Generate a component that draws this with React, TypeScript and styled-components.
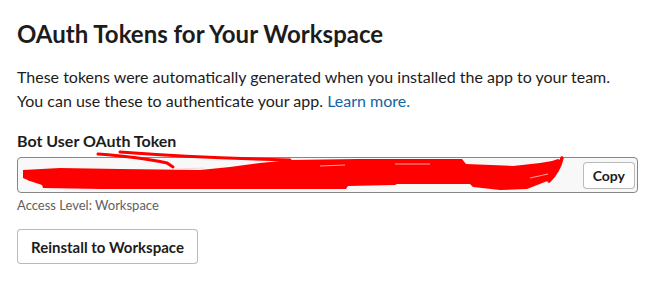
import React from 'react'
import styled, {createGlobalStyle} from 'styled-components'

const GlobalStyle = createGlobalStyle`
  html, body {
    margin: 0;
    padding: 0;
    background: #fff;
  }
  body {
    font-family: Lato, "Liberation Sans", sans-serif;
    color: #1d1c1d;
    -webkit-font-smoothing: antialiased;
  }
`

const Page = styled.div`
  padding: 19px 18px 0 17px;
`
const Title = styled.h1`
  margin: 0;
  font-size: 24px;
  font-weight: 700;
  line-height: normal;
`
const Intro = styled.p`
  margin: 17px 0 0;
  font-size: 16px;
  line-height: 24px;
`
const Link = styled.a`
  color: #1264a3;
  text-decoration: none;
`
const Label = styled.div`
  margin-top: 18px;
  font-size: 16px;
  font-weight: 700;
  line-height: 20px;
`
const FieldWrap = styled.div`
  position: relative;
  margin-top: 6px;
`
const Field = styled.div`
  box-sizing: border-box;
  height: 36px;
  display: flex;
  align-items: center;
  justify-content: space-between;
  padding: 0 2px 0 10px;
  background: #f8f8f8;
  border: 1px solid #868686;
  border-radius: 4px;
`
const TokenText = styled.span`
  font-size: 15px;
  color: #616061;
  white-space: nowrap;
  overflow: hidden;
`
const Button = styled.button<{small?: boolean}>`
  box-sizing: border-box;
  height: ${p => (p.small ? '27px' : '35px')};
  padding: 0 ${p => (p.small ? '9px' : '13px')};
  background: #fff;
  border: 1px solid rgba(29, 28, 29, 0.3);
  border-radius: 4px;
  font-family: Lato, "Liberation Sans", sans-serif;
  font-size: ${p => (p.small ? '14px' : '15px')};
  font-weight: 700;
  color: #1d1c1d;
  cursor: pointer;
`
const Scribble = styled.svg`
  position: absolute;
  left: 0;
  top: -10px;
  pointer-events: none;
`
const Hint = styled.div`
  margin-top: 3px;
  font-size: 13px;
  line-height: 18px;
  color: #616061;
`
const Actions = styled.div`
  display: flex;
  margin-top: 15px;
`

const App = () => {
  return <>
    <GlobalStyle/>
    <Page>
      <Title>OAuth Tokens for Your Workspace</Title>
      <Intro>
        These tokens were automatically generated when you installed the app to your team.<br/>
        You can use these to authenticate your app. <Link href="#">Learn more.</Link>
      </Intro>
      <Label>Bot User OAuth Token</Label>
      <FieldWrap>
        <Field>
          <TokenText>xoxb-0000000000000-0000000000000-xxxxxxxxxxxxxxxxxxxxxxxx</TokenText>
          <Button small>Copy</Button>
        </Field>
        {/* red redaction scribble, drawn in page coordinates */}
        <Scribble width="621" height="46" viewBox="17 147 621 46">
          <polygon
            fill="#ff0000"
            points="23,170 60,168 120,169 200,170 230,167 260,163 290,160 357,159 462,159 466,164 513,166 540,163 552,161 558,159 562,161 557,171 550,180 527,189 500,190 473,187 470,184 397,184 395,185 348,186 346,189 100,189 43,188 42,185 30,181 23,178"
          />
          <path d="M98 154 Q140 157 167 163 L173 167" stroke="#ff0000" strokeWidth="3" fill="none" strokeLinecap="round"/>
          <path d="M120 152 Q200 158 290 160" stroke="#ff0000" strokeWidth="3" fill="none" strokeLinecap="round"/>
          <path d="M562 158 Q559 171 549 181" stroke="#ff0000" strokeWidth="3.5" fill="none" strokeLinecap="round"/>
          <path d="M175 169 L205 168 M320 166 L345 165 M395 164 L430 164 M530 178 L548 174" stroke="#ffd0d0" strokeWidth="1" fill="none" opacity="0.8"/>
        </Scribble>
      </FieldWrap>
      <Hint>Access Level: Workspace</Hint>
      <Actions>
        <Button>Reinstall to Workspace</Button>
      </Actions>
    </Page>
  </>
}

export default App
